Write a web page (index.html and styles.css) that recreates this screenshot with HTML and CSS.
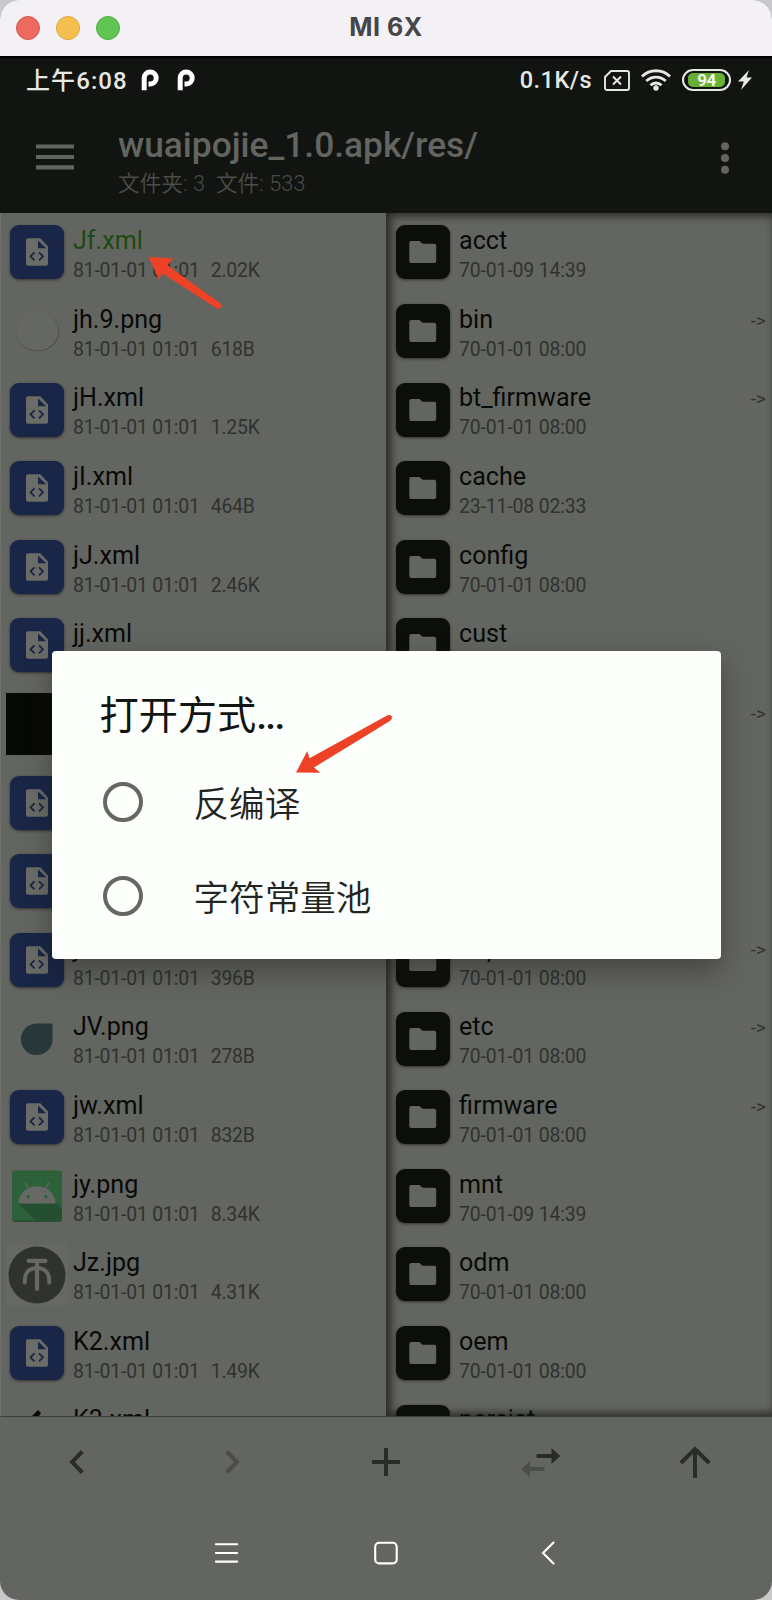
FILE: index.html
```html
<!DOCTYPE html>
<html lang="zh-CN">
<head>
<meta charset="utf-8">
<title>MI 6X</title>
<link rel="stylesheet" href="styles.css">
</head>
<body>
<svg class="defs" width="0" height="0">
  <symbol id="xml" viewBox="0 0 54 54">
    <path d="M18 13.300h12.300l7.700 8.200v17.300a2 2 0 0 1-2 2H18a2 2 0 0 1-2-2V15.300a2 2 0 0 1 2-2z" fill="#6a6c68"/>
    <path d="M28 15.500v7.800h8.300z" fill="#192647"/>
    <path d="M24.500 27.300l-4 4 4 4M29 27.300l4 4-4 4" fill="none" stroke="#192647" stroke-width="1.800"/>
  </symbol>
  <symbol id="folder" viewBox="0 0 54 54">
    <path d="M15.300 16h8.200l3 2.700h11.700a2 2 0 0 1 2 2v15.200a2 2 0 0 1-2 2H15.300a2 2 0 0 1-2-2V18a2 2 0 0 1 2-2z" fill="#636561"/>
  </symbol>
</svg>
<div class="window">
  <header class="titlebar">
    <div class="lights"><i class="light red"></i><i class="light yellow"></i><i class="light green"></i></div>
    <span class="device">MI 6X</span>
  </header>
  <div class="status">
    <span class="clock">上午6:08</span>
    <svg class="app-mark" width="18" height="22" viewBox="0 0 18 22"><path d="M3.200 21.300V9a6 6 0 1 1 6 6H7.500" fill="none" stroke="#fff" stroke-width="5"/></svg>
    <svg class="app-mark" width="18" height="22" viewBox="0 0 18 22"><path d="M3.200 21.300V9a6 6 0 1 1 6 6H7.500" fill="none" stroke="#fff" stroke-width="5"/></svg>
    <span class="speed">0.1K/s</span>
    <svg class="sim" width="26" height="21" viewBox="0 0 26 21"><path d="M7 1h16a2 2 0 0 1 2 2v15a2 2 0 0 1-2 2H3a2 2 0 0 1-2-2V7zM9 6.500l8 8M17 6.500l-8 8" fill="none" stroke="#e6e8e4" stroke-width="1.900"/></svg>
    <svg class="wifi" width="30" height="22" viewBox="0 0 30 22"><g fill="none" stroke="#e6e8e4" stroke-width="2.900"><path d="M1 7.500a20 20 0 0 1 28 0M5.300 12a14 14 0 0 1 19.400 0M9.500 16.200a8 8 0 0 1 11 0"/></g><circle cx="15" cy="19" r="2.700" fill="#e6e8e4"/></svg>
    <span class="battery"><b>94</b></span>
    <svg class="bolt" width="14" height="20" viewBox="0 0 14 20"><path d="M11 0L0 11.500h5.800L3 20 14 7.500H8.500z" fill="#e6e8e4"/></svg>
  </div>
  <div class="appbar">
    <svg class="burger" width="38" height="26" viewBox="0 0 38 26"><path d="M0 2.500h38M0 13h38M0 23.300h38" stroke="#636561" stroke-width="4.200"/></svg>
    <div class="heading">
      <div class="path">wuaipojie_1.0.apk/res/</div>
      <div class="counts">文件夹: 3&nbsp; 文件: 533</div>
    </div>
    <svg class="more" width="8" height="32" viewBox="0 0 8 32"><g fill="#636561"><circle cx="4" cy="4.300" r="4"/><circle cx="4" cy="16" r="4"/><circle cx="4" cy="27.700" r="4"/></g></svg>
  </div>
  <main class="panes">
    <section class="pane left">
      <div class="row"><svg class="tile blue"><use href="#xml"/></svg><div class="info"><p class="name opened">Jf.xml</p><p class="meta">81-01-01 01:01<span>2.02K</span></p></div></div>
      <div class="row"><svg class="thumb" viewBox="0 0 62 62"><ellipse cx="31.800" cy="31.800" rx="21.500" ry="19.700" fill="#50524d"/><ellipse cx="31.200" cy="31" rx="21" ry="19.500" fill="#656762"/></svg><div class="info"><p class="name">jh.9.png</p><p class="meta">81-01-01 01:01<span>618B</span></p></div></div>
      <div class="row"><svg class="tile blue"><use href="#xml"/></svg><div class="info"><p class="name">jH.xml</p><p class="meta">81-01-01 01:01<span>1.25K</span></p></div></div>
      <div class="row"><svg class="tile blue"><use href="#xml"/></svg><div class="info"><p class="name">jI.xml</p><p class="meta">81-01-01 01:01<span>464B</span></p></div></div>
      <div class="row"><svg class="tile blue"><use href="#xml"/></svg><div class="info"><p class="name">jJ.xml</p><p class="meta">81-01-01 01:01<span>2.46K</span></p></div></div>
      <div class="row"><svg class="tile blue"><use href="#xml"/></svg><div class="info"><p class="name">jj.xml</p></div></div>
      <div class="row"><div class="thumb black"></div></div>
      <div class="row"><svg class="tile blue"><use href="#xml"/></svg></div>
      <div class="row"><svg class="tile blue"><use href="#xml"/></svg></div>
      <div class="row"><svg class="tile blue"><use href="#xml"/></svg><div class="info"><p class="name">j</p><p class="meta">81-01-01 01:01<span>396B</span></p></div></div>
      <div class="row"><svg class="thumb" viewBox="0 0 62 62"><path d="M46.500 15.500v16a15.800 15.800 0 1 1-15.800-16z" fill="#28383a"/></svg><div class="info"><p class="name">JV.png</p><p class="meta">81-01-01 01:01<span>278B</span></p></div></div>
      <div class="row"><svg class="tile blue"><use href="#xml"/></svg><div class="info"><p class="name">jw.xml</p><p class="meta">81-01-01 01:01<span>832B</span></p></div></div>
      <div class="row"><svg class="thumb" viewBox="0 0 62 62"><rect x="6" y="6" width="50" height="51" rx="3" fill="#255030"/><rect x="6" y="5.500" width="50" height="50" rx="3" fill="#2b6039"/><path d="M12 6v49M20 6v49M28 6v49M35 6v49M43 6v49M50 6v49M6 12h50M6 20h50M6 28h50M6 36h50M6 43h50M6 50h50" stroke="#3a6c46" stroke-width=".4"/><path d="M12.500 38.500l17 17H54a2 2 0 0 0 2-2V44l-6.500-6z" fill="#244f30"/><path d="M12.500 38.500a18.500 17.300 0 0 1 37 0z" fill="#666864"/><path d="M19 17.500l4 7M43 17.500l-4 7" stroke="#666864" stroke-width="1.400"/><circle cx="22.300" cy="31.500" r="1.700" fill="#2b6039"/><circle cx="39.700" cy="31.500" r="1.700" fill="#2b6039"/></svg><div class="info"><p class="name">jy.png</p><p class="meta">81-01-01 01:01<span>8.34K</span></p></div></div>
      <div class="row"><svg class="thumb" viewBox="0 0 62 62"><rect width="62" height="62" fill="#666863"/><circle cx="31" cy="31" r="28.500" fill="#30322f"/><path d="M22.500 16.800h17M31 17v28" stroke="#666864" stroke-width="4.200" stroke-linecap="round" fill="none"/><path d="M18.800 38.500v-1.800c0-8.500 5-12.700 12.200-12.700s12.200 4.200 12.200 12.700v1.800" fill="none" stroke="#666864" stroke-width="4" stroke-linecap="round"/></svg><div class="info"><p class="name">Jz.jpg</p><p class="meta">81-01-01 01:01<span>4.31K</span></p></div></div>
      <div class="row"><svg class="tile blue"><use href="#xml"/></svg><div class="info"><p class="name">K2.xml</p><p class="meta">81-01-01 01:01<span>1.49K</span></p></div></div>
      <div class="row"><svg class="thumb" viewBox="0 0 62 62"><path d="M22 19l10-10 3 3-10 16z" fill="#060805"/></svg><div class="info"><p class="name">K3.xml</p></div></div>
    </section>
    <section class="pane right">
      <div class="row"><svg class="tile dark"><use href="#folder"/></svg><div class="info"><p class="name">acct</p><p class="meta">70-01-09 14:39</p></div></div>
      <div class="row"><svg class="tile dark"><use href="#folder"/></svg><div class="info"><p class="name">bin</p><p class="meta">70-01-01 08:00</p></div><span class="link">-&gt;</span></div>
      <div class="row"><svg class="tile dark"><use href="#folder"/></svg><div class="info"><p class="name">bt_firmware</p><p class="meta">70-01-01 08:00</p></div><span class="link">-&gt;</span></div>
      <div class="row"><svg class="tile dark"><use href="#folder"/></svg><div class="info"><p class="name">cache</p><p class="meta">23-11-08 02:33</p></div></div>
      <div class="row"><svg class="tile dark"><use href="#folder"/></svg><div class="info"><p class="name">config</p><p class="meta">70-01-01 08:00</p></div></div>
      <div class="row"><svg class="tile dark"><use href="#folder"/></svg><div class="info"><p class="name">cust</p></div></div>
      <div class="row"><svg class="tile dark"><use href="#folder"/></svg><div class="info"></div><span class="link">-&gt;</span></div>
      <div class="row"><svg class="tile dark"><use href="#folder"/></svg></div>
      <div class="row"><svg class="tile dark"><use href="#folder"/></svg></div>
      <div class="row"><svg class="tile dark"><use href="#folder"/></svg><div class="info"><p class="name">dsp</p><p class="meta">70-01-01 08:00</p></div><span class="link">-&gt;</span></div>
      <div class="row"><svg class="tile dark"><use href="#folder"/></svg><div class="info"><p class="name">etc</p><p class="meta">70-01-01 08:00</p></div><span class="link">-&gt;</span></div>
      <div class="row"><svg class="tile dark"><use href="#folder"/></svg><div class="info"><p class="name">firmware</p><p class="meta">70-01-01 08:00</p></div><span class="link">-&gt;</span></div>
      <div class="row"><svg class="tile dark"><use href="#folder"/></svg><div class="info"><p class="name">mnt</p><p class="meta">70-01-09 14:39</p></div></div>
      <div class="row"><svg class="tile dark"><use href="#folder"/></svg><div class="info"><p class="name">odm</p><p class="meta">70-01-01 08:00</p></div></div>
      <div class="row"><svg class="tile dark"><use href="#folder"/></svg><div class="info"><p class="name">oem</p><p class="meta">70-01-01 08:00</p></div></div>
      <div class="row"><svg class="tile dark"><use href="#folder"/></svg><div class="info"><p class="name">persist</p></div></div>
    </section>
  </main>
  <nav class="tools">
    <svg viewBox="0 0 40 40"><path d="M25.300 9.500L15 20l10.300 10.500" class="ink"/></svg>
    <svg viewBox="0 0 40 40"><path d="M14.700 9.500L25 20 14.700 30.500" class="ink faint"/></svg>
    <svg viewBox="0 0 40 40"><path d="M20 6v28M6 20h28" class="ink"/></svg>
    <svg viewBox="0 0 40 40"><path d="M16.500 12h15V6l8.700 8-8.700 8v-6h-15z" fill="#2a2c29"/><path d="M24.500 25H10v-6L1 27l9 8.300V29h14.500z" fill="#4b4d49"/></svg>
    <svg viewBox="0 0 40 40"><path d="M20 36V7M5.800 21L20 7l14.200 14" class="ink"/></svg>
  </nav>
  <nav class="system">
    <svg viewBox="0 0 24 24"><path d="M2.900 3.300h21.300M2.900 12h21.300M2.900 20.600h21.300" class="line"/></svg>
    <svg viewBox="0 0 24 24"><rect x="1.200" y="1.700" width="21.500" height="20.700" rx="4" class="line"/></svg>
    <svg viewBox="0 0 24 24"><path d="M18.500 1.500L8 12l10.500 10.500" class="line"/></svg>
  </nav>
  <div class="dialog">
    <h1 class="ask">打开方式<span>...</span></h1>
    <label class="option"><i class="radio"></i><span>反编译</span></label>
    <label class="option"><i class="radio"></i><span>字符常量池</span></label>
  </div>
  <svg class="marks" width="772" height="1600" viewBox="0 0 772 1600"><g fill="#ed4226"><path d="M148.500 256.800l24.700 1.800-5.700 6.600L220.500 303.500q2 2.500 .2 4.300-1.900 1.500-4.200 .4L162.500 273.500l-3.600 6z"/><path d="M296 772.500l11.300-21.500 2.200 7.300L387.500 715.300q3.300-.9 4.300 1.200.8 2.600-1.500 4.200L314 767.500l6.300 5.200z"/></g></svg>
</div>
</body>
</html>
```
FILE: styles.css
```css
* { box-sizing: border-box; }
body { margin: 0; background: #c9c8ca; }
p, h1 { margin: 0; font-weight: 400; }
svg { display: block; flex: none; overflow: visible; }
.defs { position: absolute; }

.window {
  position: relative;
  width: 772px;
  height: 1600px;
  overflow: hidden;
  display: flex;
  flex-direction: column;
  border-radius: 19px;
  background: #636561;
  font-family: Roboto, "Noto Sans CJK SC", sans-serif;
}

/* Desktop window frame */
.titlebar {
  height: 56px;
  flex: none;
  display: grid;
  grid-template-columns: 1fr auto 1fr;
  align-items: center;
  background: #f3f1f6;
}
.lights { display: flex; gap: 16px; padding-left: 16px; }
.light { width: 24px; height: 24px; border-radius: 50%; border: 1px solid; }
.red { background: #ed6a5f; border-color: #d5574d; }
.yellow { background: #f5bf4f; border-color: #dba53b; }
.green { background: #61c554; border-color: #4dab41; }
.device { font: 700 25px/52px Inter, sans-serif; color: #464548; padding-bottom: 2px; letter-spacing: .5px; }

/* Phone status bar */
.status {
  height: 49px;
  flex: none;
  display: flex;
  align-items: center;
  padding: 0 20px 3px 26px;
  border-top: 2px solid #000;
  background: #121411;
  color: #e6e8e4;
}
.clock { width: 115px; padding-bottom: 4px; font-size: 24px; font-weight: 500; letter-spacing: 1.100px; white-space: nowrap; }
.app-mark { margin-right: 18px; }
.speed { margin-left: auto; margin-right: 12px; font-size: 23.500px; font-weight: 500; letter-spacing: .5px; }
.sim { margin-right: 11px; }
.wifi { margin-right: 11px; }
.battery {
  width: 49px;
  height: 22px;
  padding: 2px 4px;
  border: 2px solid #e6e8e4;
  border-radius: 11px;
  margin-right: 7px;
}
.battery b { display: block; height: 14px; border-radius: 5px; background: #67b035; font: 700 17px/15px Roboto, sans-serif; text-align: center; letter-spacing: -.5px; color: #f2f6ee; }

/* App bar */
.appbar { height: 108px; flex: none; display: flex; align-items: flex-start; padding: 0 43px 0 36px; background: #121411; }
.burger { margin: 39px 44px 0 0; }
.heading { flex: 1; padding-top: 19px; white-space: nowrap; }
.path { font-size: 35.300px; line-height: 42px; font-weight: 500; color: #636561; }
.counts { font-size: 21.600px; line-height: 36px; font-weight: 350; letter-spacing: .1px; color: #4b4d49; }
.more { margin-top: 37px; }

/* File panes */
.panes { height: 1204px; flex: none; display: grid; grid-template-columns: 386px 386px; }
.pane { overflow: hidden; border-bottom: 1px solid #3c3e3a; }
.left { border-left: 1px solid #70726e; }
.right { box-shadow: inset 8px 0 10px -3px #2a2c29, inset 0 7px 9px -4px #30322e, inset 0 -7px 8px -4px #30322e; }
.row { height: 78.640px; display: flex; align-items: flex-start; }
.left .row { padding-left: 9px; }
.right .row { padding: 0 6px 0 10px; }
.tile { width: 54px; height: 54px; margin: 12.300px 9px 0 0; border-radius: 9px; box-shadow: 0 1px 3px #30322e; }
.blue { background: #192647; }
.dark { background: #0c0e0b; }
.thumb { width: 62px; height: 62px; margin: 8.500px 5px 0 -4px; }
.black { background: #070904; }
.info { flex: 1; padding-top: 13px; white-space: nowrap; }
.name { font-size: 25.100px; line-height: 30px; color: #080a07; }
.opened { color: #1c4a10; }
.meta { font-size: 19.400px; line-height: 30px; color: #30322f; letter-spacing: -.13px; }
.meta span { margin-left: 11px; }
.left .meta { letter-spacing: -.18px; }
.link { margin-top: 19px; font-size: 19px; line-height: 20px; color: #30322f; }

/* App toolbar */
.tools { height: 90px; flex: none; display: grid; grid-template-columns: repeat(5, 1fr); justify-items: center; align-items: center; }
.tools svg { width: 40px; height: 40px; }
.ink { fill: none; stroke: #2a2c29; stroke-width: 4; }
.faint { stroke: #4b4d49; }

/* System navigation */
.system { display: grid; grid-template-columns: repeat(3, 161px); justify-content: center; justify-items: center; padding-top: 34px; }
.system svg { width: 24px; height: 24px; }
.line { fill: none; stroke: #fff; stroke-width: 2.100; stroke-linecap: round; }

/* Open-with dialog */
.dialog {
  position: absolute;
  left: 51.500px;
  top: 651px;
  width: 669px;
  height: 308px;
  padding: 36px 49px 0 48px;
  border-radius: 4px;
  background: #fdfffc;
  box-shadow: 0 12px 28px rgba(20, 22, 18, .4);
}
.ask { height: 68px; font-size: 39.200px; line-height: 59px; color: #121411; }
.ask span { font-weight: 500; letter-spacing: -1.800px; }
.option { height: 94.300px; display: flex; align-items: center; gap: 51px; font-size: 35.600px; font-weight: 350; color: #222421; }
.option span { padding-bottom: 2px; }
.radio { width: 40px; height: 40px; border: 4px solid #656764; border-radius: 50%; margin-left: 3px; }

.marks { position: absolute; left: 0; top: 0; }
```
